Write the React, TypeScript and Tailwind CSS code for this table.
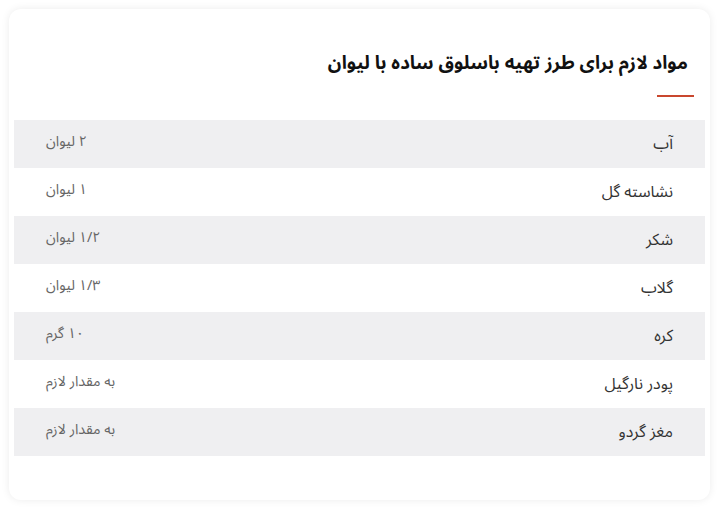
const rows = [
  { name: 'آب', amount: '۲ لیوان' },
  { name: 'نشاسته گل', amount: '۱ لیوان' },
  { name: 'شکر', amount: '۱/۲ لیوان' },
  { name: 'گلاب', amount: '۱/۳ لیوان' },
  { name: 'کره', amount: '۱۰ گرم' },
  { name: 'پودر نارگیل', amount: 'به مقدار لازم' },
  { name: 'مغز گردو', amount: 'به مقدار لازم' },
];

export default function App() {
  return (
    <div
      dir="rtl"
      className="w-[722px] h-[514px] bg-white p-[9px] pr-[12px]"
      style={{ fontFamily: '"Noto Sans Arabic", "DejaVu Sans", sans-serif' }}
    >
      <div className="h-[491px] rounded-xl bg-white shadow-[0_0_8px_rgba(0,0,0,0.08)] px-[5px] pt-[36px]">
        <div className="pr-[17px]">
          <h2 className="text-[18.7px] font-bold text-[#111] leading-[36px]">
            مواد لازم برای طرز تهیه باسلوق ساده با لیوان
          </h2>
          <div className="mt-[14px] mb-[23px] h-[2px] w-[37px] bg-[#c9472e] mr-[-6px]" />
        </div>
        <div className="flex flex-col">
          {rows.map((r, i) => (
            <div
              key={r.name}
              className={`flex h-12 items-center justify-between px-8 ${i % 2 === 0 ? 'bg-[#efeff1]' : 'bg-white'}`}
            >
              <span className="text-[16px] text-[#333]">{r.name}</span>
              <span className="pb-[5px] text-[14.3px] text-[#666]">{r.amount}</span>
            </div>
          ))}
        </div>
      </div>
    </div>
  );
}
